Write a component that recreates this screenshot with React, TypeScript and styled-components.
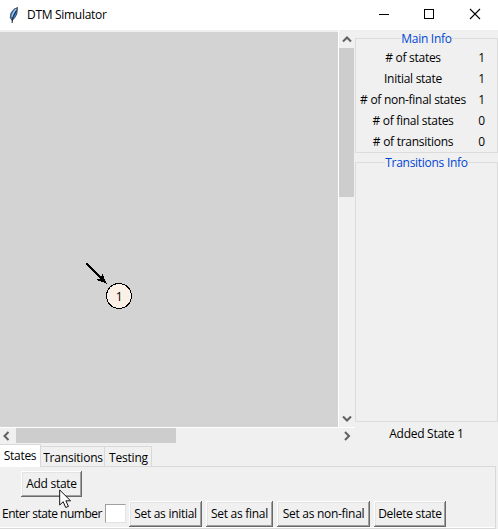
import React from "react";
import styled, { createGlobalStyle } from "styled-components";

const Global = createGlobalStyle`
  * { box-sizing: border-box; }
  body { margin: 0; overflow: hidden; }
`;

const Window = styled.div`
  width: 498px;
  height: 529px;
  position: relative;
  display: flex;
  flex-direction: column;
  background: #f0f0f0;
  color: #000;
  font: 12px/16px "Open Sans", "Noto Sans", sans-serif;
  white-space: nowrap;
  overflow: hidden;
`;

const Label = styled.span<{ $s?: number }>`
  letter-spacing: ${(p) => p.$s ?? -0.28}px;
`;

const TitleBar = styled.header`
  height: 30px;
  flex: none;
  background: #fff;
  display: flex;
  align-items: center;
  padding-left: 8px;
`;

const Title = styled.div`
  flex: 1;
  padding-left: 7px;
`;

const Caption = styled.div`
  width: 45px;
  height: 30px;
`;

const Main = styled.div`
  height: 414px;
  flex: none;
  display: flex;
`;

const Viewport = styled.div`
  width: 355px;
  display: grid;
  grid-template-columns: 338px 17px;
  grid-template-rows: 397px 17px;
`;

const Canvas = styled.div`
  margin-top: 2px;
  background: #d3d3d3;
`;

const VBar = styled.div`
  border-left: 1px solid #fff;
  padding-right: 1px;
  display: flex;
  flex-direction: column;
  justify-content: space-between;
`;

const VThumb = styled.div`
  height: 149px;
  background: #cdcdcd;
  margin-bottom: auto;
`;

const HBar = styled.div`
  grid-column: 1 / 3;
  border-top: 1px solid #fff;
  padding-bottom: 1px;
  display: flex;
`;

const HThumb = styled.div`
  width: 160px;
  background: #cdcdcd;
  margin-right: auto;
`;

const Arrow = styled.svg`
  flex: none;
  display: block;
`;

const Side = styled.aside`
  width: 143px;
  padding-top: 8px;
  display: flex;
  flex-direction: column;
`;

const Group = styled.section<{ $h: number }>`
  height: ${(p) => p.$h}px;
  flex: none;
  border: 1px solid #dcdcdc;

  & + & {
    margin-top: 9px;
  }
`;

const Legend = styled.div`
  width: fit-content;
  height: 16px;
  margin: -8px auto 0;
  background: #f0f0f0;
  color: #0046d5;
`;

const InfoRow = styled.div`
  height: 21px;
  padding: 3px 0 0 2px;
  display: grid;
  grid-template-columns: 110px 27px;
  text-align: center;
`;

const Status = styled.div`
  height: 22px;
  padding-top: 4px;
  text-align: center;
`;

const Tabs = styled.nav`
  height: 22px;
  flex: none;
  display: flex;
  align-items: flex-start;
`;

const Tab = styled.div<{ $w: number; $active?: boolean }>`
  width: ${(p) => p.$w}px;
  height: ${(p) => (p.$active ? 23 : 20)}px;
  margin-top: ${(p) => (p.$active ? 0 : 2)}px;
  padding: 3px 0 0 ${(p) => (p.$active ? 0 : 1)}px;
  border: 1px solid #d9d9d9;
  border-width: 1px 1px 0 0;
  background: ${(p) => (p.$active ? "#fff" : "#f0f0f0")};
  text-align: center;
  z-index: 1;
`;

const Pane = styled.div`
  width: 496px;
  height: 63px;
  flex: none;
  border: 1px solid #d9d9d9;
  border-left: 0;
  box-shadow: inset 0 -1px #fff;
  display: flex;
  flex-direction: column;
  justify-content: space-between;
  padding-top: 4px;
`;

const Button = styled.button<{ $w: number }>`
  width: ${(p) => p.$w}px;
  height: 26px;
  flex: none;
  padding: 0;
  border: 0;
  background: #f0f0f0;
  font: inherit;
  color: #000;
  box-shadow: inset -1px -1px #696969, inset 1px 1px #fff,
    inset -2px -2px #a0a0a0, inset 2px 2px #e3e3e3;
`;

const TopRow = styled.div`
  height: 26px;
  padding-left: 21px;
  display: flex;
`;

const EditRow = styled.div`
  height: 27px;
  display: flex;
  gap: 4px;
`;

const Prompt = styled.label`
  width: 125px;
  flex: none;
  display: flex;
  padding: 3px 0 0 1px;
`;

const PromptText = styled.span`
  width: 104px;
  flex: none;
  padding: 2px 0 0 1px;
`;

const Field = styled.input`
  width: 21px;
  height: 19px;
  flex: none;
  padding: 0;
  border: 1px solid #a0a0a0;
  border-right-color: #e3e3e3;
  border-bottom-color: #e3e3e3;
  background: #fff;
  outline: 0;
`;

const Cursor = styled.svg`
  position: absolute;
  left: 59px;
  top: 489px;
`;

const arrows = {
  up: "M4 11.5 8 7.5 12 11.5",
  down: "M4 5.5 8 9.5 12 5.5",
  left: "M8.5 4 4.5 8 8.5 12",
  right: "M6 4 10 8 6 12",
};

function ScrollArrow({ dir, w = 15, h = 15 }: { dir: keyof typeof arrows; w?: number; h?: number }) {
  return (
    <Arrow width={w} height={h} viewBox={`0 0 ${w} ${h}`} fill="none" stroke="#606060" strokeWidth="2">
      <path d={arrows[dir]} />
    </Arrow>
  );
}

const info: [string, number][] = [
  ["# of states", 1],
  ["Initial state", 1],
  ["# of non-final states", 1],
  ["# of final states", 0],
  ["# of transitions", 0],
];

const actions: [string, number][] = [
  ["Set as initial", 73],
  ["Set as final", 67],
  ["Set as non-final", 93],
  ["Delete state", 72],
];

export default function App() {
  return (
    <>
      <Global />
      <Window>
        <TitleBar>
          <svg width="12" height="18" viewBox="0 0 12 18">
            <path d="M9.5 1.5 6 3.2 3 7 2.3 11.5 4 14.5 6.5 12 8.8 8Z" fill="#3d7dc4" stroke="#3a4148" strokeWidth=".9" />
            <path d="M8 3 5 7.5 4 11" fill="none" stroke="#9fd0fa" strokeWidth="1.2" />
            <path d="M8.5 4.5 5.2 10.5 4 17" fill="none" stroke="#182438" />
          </svg>
          <Title><Label $s={-0.3}>DTM Simulator</Label></Title>
          <Caption>
            <svg width="45" height="30"><path d="M16 14.5h10" stroke="#000" /></svg>
          </Caption>
          <Caption>
            <svg width="45" height="30"><rect x="16.5" y="9.5" width="9" height="9" fill="none" stroke="#000" /></svg>
          </Caption>
          <Caption>
            <svg width="45" height="30"><path d="m17 9 10 10M27 9 17 19" stroke="#000" strokeWidth="1.1" /></svg>
          </Caption>
        </TitleBar>
        <Main>
          <Viewport>
            <Canvas>
              <svg width="338" height="395" viewBox="0 32 338 395" shapeRendering="crispEdges">
                <path d="M86.5 263.5 101 278" stroke="#000" strokeWidth="2.4" />
                <path d="M106.5 283.5 96 280 101 278 102.5 273.5Z" fill="#000" />
                <circle cx="119" cy="296" r="12.5" fill="#faf0e6" stroke="#000" />
                <text x="119.3" y="300.5" textAnchor="middle" fontSize="12">1</text>
              </svg>
            </Canvas>
            <VBar>
              <ScrollArrow dir="up" h={18} />
              <VThumb />
              <ScrollArrow dir="down" h={16} />
            </VBar>
            <HBar>
              <ScrollArrow dir="left" w={16} />
              <HThumb />
              <ScrollArrow dir="right" w={16} />
            </HBar>
          </Viewport>
          <Side>
            <Group $h={115}>
              <Legend><Label>Main Info</Label></Legend>
              {info.map(([name, value]) => (
                <InfoRow key={name}>
                  <Label>{name}</Label>
                  <Label>{value}</Label>
                </InfoRow>
              ))}
            </Group>
            <Group $h={260}>
              <Legend><Label>Transitions Info</Label></Legend>
            </Group>
            <Status><Label>Added State 1</Label></Status>
          </Side>
        </Main>
        <Tabs>
          <Tab $w={41} $active><Label>States</Label></Tab>
          <Tab $w={64}><Label $s={-0.2}>Transitions</Label></Tab>
          <Tab $w={47}><Label $s={-0.2}>Testing</Label></Tab>
        </Tabs>
        <Pane>
          <TopRow><Button $w={61}><Label>Add state</Label></Button></TopRow>
          <EditRow>
            <Prompt><PromptText><Label $s={-0.48}>Enter state number</Label></PromptText><Field /></Prompt>
            {actions.map(([name, w]) => (
              <Button key={name} $w={w}><Label>{name}</Label></Button>
            ))}
          </EditRow>
        </Pane>
        <Cursor width="14" height="20" viewBox="0 0 14 20">
          <path d="M.7 1v15l3.5-3.3 2.5 5.8 2.7-1.1-2.5-5.6h4.7Z" fill="#fff" stroke="#111" />
        </Cursor>
      </Window>
    </>
  );
}
